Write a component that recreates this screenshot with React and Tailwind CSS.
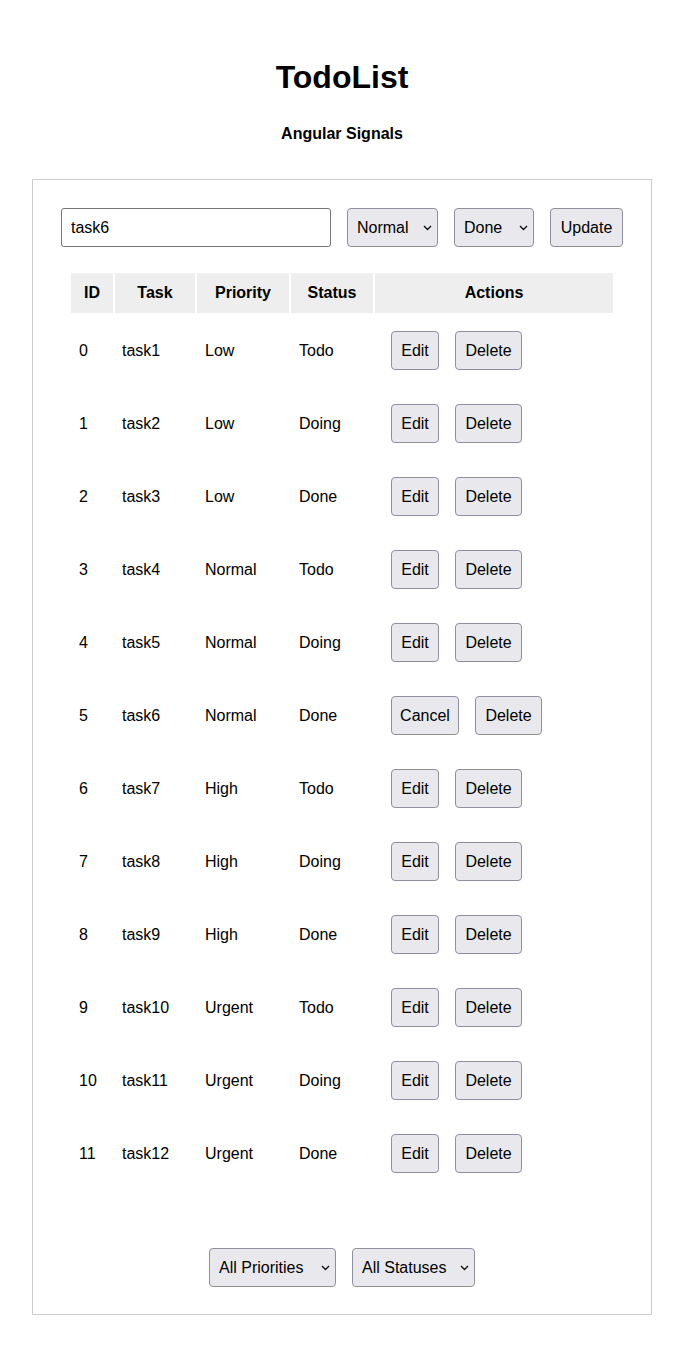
const tasks = [
  { id: 0, name: "task1", priority: "Low", status: "Todo" },
  { id: 1, name: "task2", priority: "Low", status: "Doing" },
  { id: 2, name: "task3", priority: "Low", status: "Done" },
  { id: 3, name: "task4", priority: "Normal", status: "Todo" },
  { id: 4, name: "task5", priority: "Normal", status: "Doing" },
  { id: 5, name: "task6", priority: "Normal", status: "Done" },
  { id: 6, name: "task7", priority: "High", status: "Todo" },
  { id: 7, name: "task8", priority: "High", status: "Doing" },
  { id: 8, name: "task9", priority: "High", status: "Done" },
  { id: 9, name: "task10", priority: "Urgent", status: "Todo" },
  { id: 10, name: "task11", priority: "Urgent", status: "Doing" },
  { id: 11, name: "task12", priority: "Urgent", status: "Done" },
];

const btn =
  "h-[39px] rounded-[4px] border border-[#8f8f9d] bg-[#e9e9ed] text-black text-base text-center";

const Select = ({ value, options, width }) => (
  <div className={`relative ${width} h-[39px]`}>
    <select
      defaultValue={value}
      className="appearance-none w-full h-full pl-[9px] pr-5 rounded-[4px] border border-[#8f8f9d] bg-[#e9e9ed] text-base text-black outline-none"
    >
      {options.map((o) => (
        <option key={o}>{o}</option>
      ))}
    </select>
    <svg
      className="pointer-events-none absolute right-[6px] top-1/2 -translate-y-1/2"
      width="9"
      height="6"
      viewBox="0 0 9 6"
      fill="none"
    >
      <path d="M1 1l3.5 3.5L8 1" stroke="#111" strokeWidth="1.4" />
    </svg>
  </div>
);

export default function App() {
  const editing = 5;

  return (
    <div
      className="min-h-screen bg-white text-black pb-[32px]"
      style={{ fontFamily: '"Liberation Sans", Arial, sans-serif' }}
    >
      <h1 className="text-[32px] font-bold text-center pt-[53px] leading-[48px]">TodoList</h1>
      <h2 className="text-base font-bold text-center mt-[21px] leading-6">Angular Signals</h2>

      <div className="mx-[32px] mt-[33px] border border-[#cccccc] px-[28px] pt-[28px] pb-[27px]">
        <div className="flex gap-4">
          <input
            defaultValue="task6"
            className="flex-1 h-[39px] px-[9px] rounded-[3px] border border-[#767676] bg-white text-base outline-none"
          />
          <Select value="Normal" options={["Low", "Normal", "High", "Urgent"]} width="w-[91px]" />
          <Select value="Done" options={["Todo", "Doing", "Done"]} width="w-[80px]" />
          <button className={`${btn} w-[73px]`}>Update</button>
        </div>

        <table className="mx-auto mt-[24px] border-separate border-spacing-[2px] text-base">
          <thead>
            <tr>
              <th className="w-[42px] h-[40px] bg-[#eeeeee] font-bold">ID</th>
              <th className="w-[80px] bg-[#eeeeee] font-bold">Task</th>
              <th className="w-[92px] bg-[#eeeeee] font-bold">Priority</th>
              <th className="w-[82px] bg-[#eeeeee] font-bold">Status</th>
              <th className="w-[238px] bg-[#eeeeee] font-bold">Actions</th>
            </tr>
          </thead>
          <tbody>
            {tasks.map((t) => (
              <tr key={t.id}>
                <td className="px-[8px] py-[16px] align-middle">{t.id}</td>
                <td className="px-[7px] py-[16px] align-middle">{t.name}</td>
                <td className="px-[8px] py-[16px] align-middle">{t.priority}</td>
                <td className="px-[8px] py-[16px] align-middle">{t.status}</td>
                <td className="pl-[16px] py-[16px] align-middle">
                  <div className="flex gap-4">
                    {t.id === editing ? (
                      <button className={`${btn} w-[68px]`}>Cancel</button>
                    ) : (
                      <button className={`${btn} w-[48px]`}>Edit</button>
                    )}
                    <button className={`${btn} w-[67px]`}>Delete</button>
                  </div>
                </td>
              </tr>
            ))}
          </tbody>
        </table>

        <div className="flex justify-center gap-4 mt-[57px]">
          <Select
            value="All Priorities"
            options={["All Priorities", "Low", "Normal", "High", "Urgent"]}
            width="w-[127px]"
          />
          <Select
            value="All Statuses"
            options={["All Statuses", "Todo", "Doing", "Done"]}
            width="w-[123px]"
          />
        </div>
      </div>
    </div>
  );
}
